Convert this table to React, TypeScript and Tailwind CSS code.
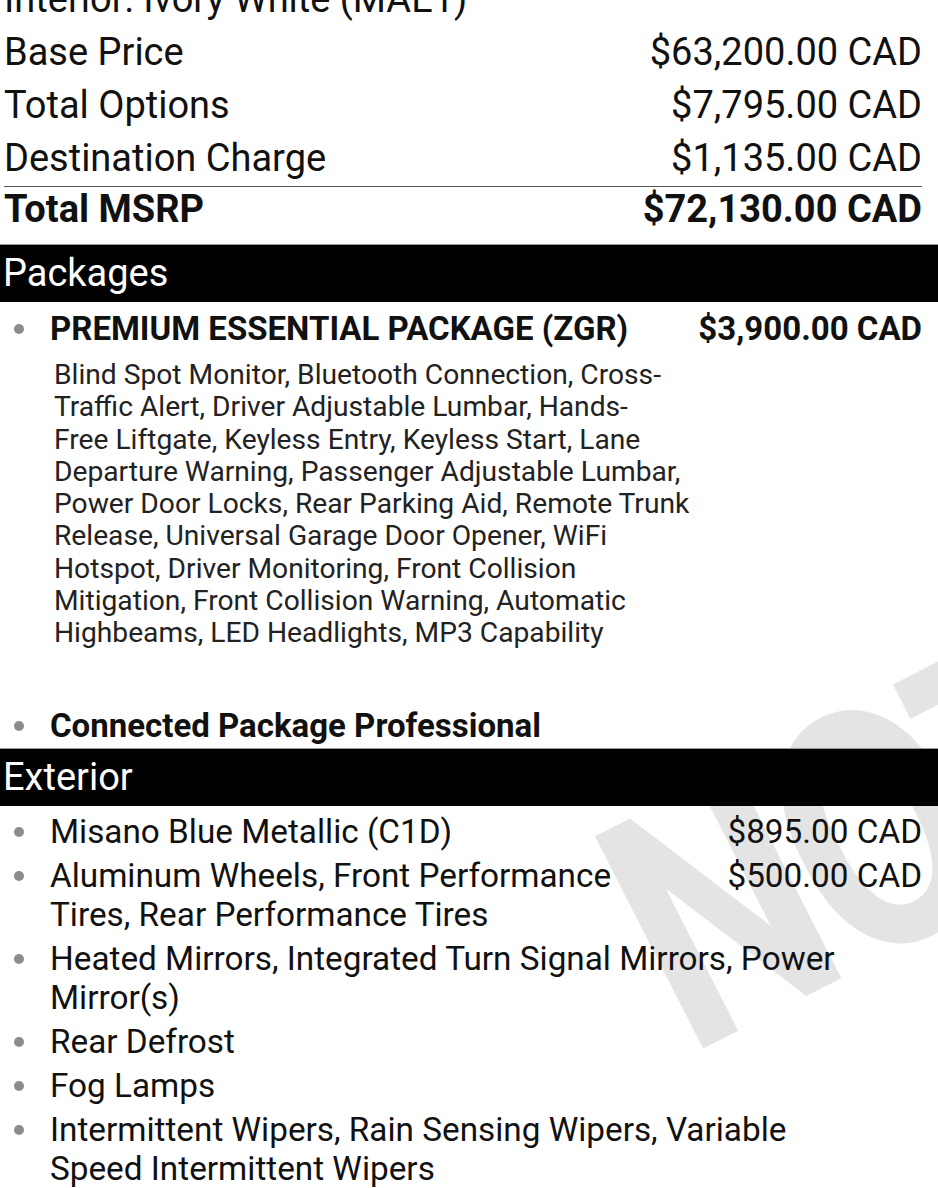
const summary = [
  { label: "Base Price", value: "$63,200.00 CAD" },
  { label: "Total Options", value: "$7,795.00 CAD" },
  { label: "Destination Charge", value: "$1,135.00 CAD" },
];

const exterior: { name: string; price?: string }[] = [
  { name: "Misano Blue Metallic (C1D)", price: "$895.00 CAD" },
  { name: "Aluminum Wheels, Front Performance Tires, Rear Performance Tires", price: "$500.00 CAD" },
  { name: "Heated Mirrors, Integrated Turn Signal Mirrors, Power Mirror(s)" },
  { name: "Rear Defrost" },
  { name: "Fog Lamps" },
  { name: "Intermittent Wipers, Rain Sensing Wipers, Variable Speed Intermittent Wipers" },
];

// line breaks as printed on the sticker
const premiumLines = [
  "Blind Spot Monitor, Bluetooth Connection, Cross-",
  "Traffic Alert, Driver Adjustable Lumbar, Hands-",
  "Free Liftgate, Keyless Entry, Keyless Start, Lane",
  "Departure Warning, Passenger Adjustable Lumbar,",
  "Power Door Locks, Rear Parking Aid, Remote Trunk",
  "Release, Universal Garage Door Opener, WiFi",
  "Hotspot, Driver Monitoring, Front Collision",
  "Mitigation, Front Collision Warning, Automatic",
  "Highbeams, LED Headlights, MP3 Capability",
];

function Dot() {
  return (
    <span className="flex w-[50px] shrink-0 pl-[14px]">
      <span className="mt-[15px] h-[10px] w-[10px] rounded-full bg-[#8c8c8c]" />
    </span>
  );
}

function SectionBar({ title }: { title: string }) {
  return (
    <div className="h-[58px] border-t border-[#9a9a9a] bg-black px-[3px] text-[38px] leading-[57px] text-white">
      {title}
    </div>
  );
}

export default function App() {
  return (
    <div className="relative h-[1188px] w-[938px] overflow-hidden bg-white font-['Roboto',sans-serif] text-[#111]">
      <span
        aria-hidden
        className="pointer-events-none absolute left-[560px] top-[805px] origin-top-left -rotate-[27deg] scale-x-[0.8] select-none whitespace-nowrap font-['Roboto',sans-serif] text-[335px] font-bold leading-none tracking-[-12px] text-[#e4e4e4]"
      >
        NOT
      </span>

      <div className="relative">
        <div className="pl-[4px] pr-[16px]">
          <div className="-mt-[27px] text-[38px] leading-[53px]">Interior: Ivory White (MAE1)</div>
          {summary.map((row) => (
            <div key={row.label} className="flex justify-between text-[38px] leading-[53px]">
              <span>{row.label}</span>
              <span>{row.value}</span>
            </div>
          ))}
          <div className="mt-[1px] h-px bg-[#555]" />
          <div className="flex justify-between pb-[13px] text-[38px] font-bold leading-[44px]">
            <span>Total MSRP</span>
            <span>$72,130.00 CAD</span>
          </div>
        </div>

        <SectionBar title="Packages" />
        <ul className="pr-[16px] pt-[7px]">
          <li className="flex text-[33px] leading-[39px]">
            <Dot />
            <div className="min-w-0 flex-1">
              <div className="font-bold">PREMIUM ESSENTIAL PACKAGE (ZGR)</div>
              <p className="mt-[11px] whitespace-nowrap pl-[4px] text-[28.2px] leading-[32.3px] text-[#222]">
                {premiumLines.map((line) => (
                  <span key={line} className="block">
                    {line}
                  </span>
                ))}
              </p>
            </div>
            <span className="w-[232px] shrink-0 text-right font-bold">$3,900.00 CAD</span>
          </li>
          <li className="mt-[56px] flex text-[33px] font-bold leading-[39px]">
            <Dot />
            <span>Connected Package Professional</span>
          </li>
        </ul>

        <div className="mt-[3px]">
          <SectionBar title="Exterior" />
        </div>
        <ul className="flex flex-col gap-[5px] pr-[16px] pt-[6px]">
          {exterior.map((item) => (
            <li key={item.name} className="flex text-[33.3px] leading-[39px]">
              <Dot />
              <span className={item.price ? "min-w-0 flex-1" : "min-w-0 flex-1 pr-[60px]"}>{item.name}</span>
              {item.price && <span className="w-[232px] shrink-0 text-right">{item.price}</span>}
            </li>
          ))}
        </ul>
      </div>
    </div>
  );
}
